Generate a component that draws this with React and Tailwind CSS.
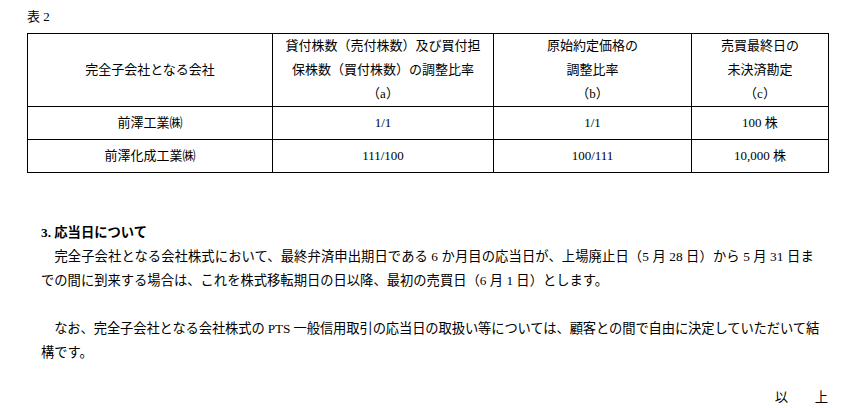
import React from "react";

const font = {
  fontFamily: '"Liberation Serif", "Noto Sans CJK JP", serif',
};

const rows = [
  { name: "前澤工業㈱", a: "1/1", b: "1/1", c: "100 株" },
  { name: "前澤化成工業㈱", a: "111/100", b: "100/111", c: "10,000 株" },
];

const indent = "\u3000";

export default function App() {
  return (
    <div
      className="bg-white text-black w-[853px] h-[408px] overflow-hidden pt-[5px] pl-[27px] text-[13px] leading-[24px] font-normal"
      style={font}
    >
      <div className="mb-[4px]">表 2</div>

      <table className="table-fixed border-collapse w-[801px] text-center">
        <colgroup>
          <col className="w-[245px]" />
          <col className="w-[221px]" />
          <col className="w-[198px]" />
          <col className="w-[137px]" />
        </colgroup>
        <thead>
          <tr>
            <th className="border border-black font-normal align-middle">完全子会社となる会社</th>
            <th className="border border-black font-normal">
              貸付株数（売付株数）及び買付担
              <br />
              保株数（買付株数）の調整比率
              <br />
              （a）
            </th>
            <th className="border border-black font-normal">
              原始約定価格の
              <br />
              調整比率
              <br />
              （b）
            </th>
            <th className="border border-black font-normal">
              売買最終日の
              <br />
              未決済勘定
              <br />
              （c）
            </th>
          </tr>
        </thead>
        <tbody>
          {rows.map((r) => (
            <tr key={r.name}>
              <td className="border border-black py-[4px]">{r.name}</td>
              <td className="border border-black py-[4px]">{r.a}</td>
              <td className="border border-black py-[4px]">{r.b}</td>
              <td className="border border-black py-[4px]">{r.c}</td>
            </tr>
          ))}
        </tbody>
      </table>

      <div className="ml-[14px] w-[787px] mt-[48px] text-[13.3px]">
        <div className="font-bold">3. 応当日について</div>
        <div className="whitespace-nowrap tracking-[0.1px]">
          {indent}完全子会社となる会社株式において、最終弁済申出期日である 6 か月目の応当日が、上場廃止日（5 月 28 日）から 5 月 31 日ま
        </div>
        <div className="whitespace-nowrap">
          での間に到来する場合は、これを株式移転期日の日以降、最初の売買日（6 月 1 日）とします。
        </div>
        <div className="h-[24px]" />
        <div className="whitespace-nowrap tracking-[-0.12px]">
          {indent}なお、完全子会社となる会社株式の PTS 一般信用取引の応当日の取扱い等については、顧客との間で自由に決定していただいて結
        </div>
        <div className="whitespace-nowrap">構です。</div>
        <div className="h-[21px]" />
        <div className="text-right">以　　上</div>
      </div>
    </div>
  );
}
